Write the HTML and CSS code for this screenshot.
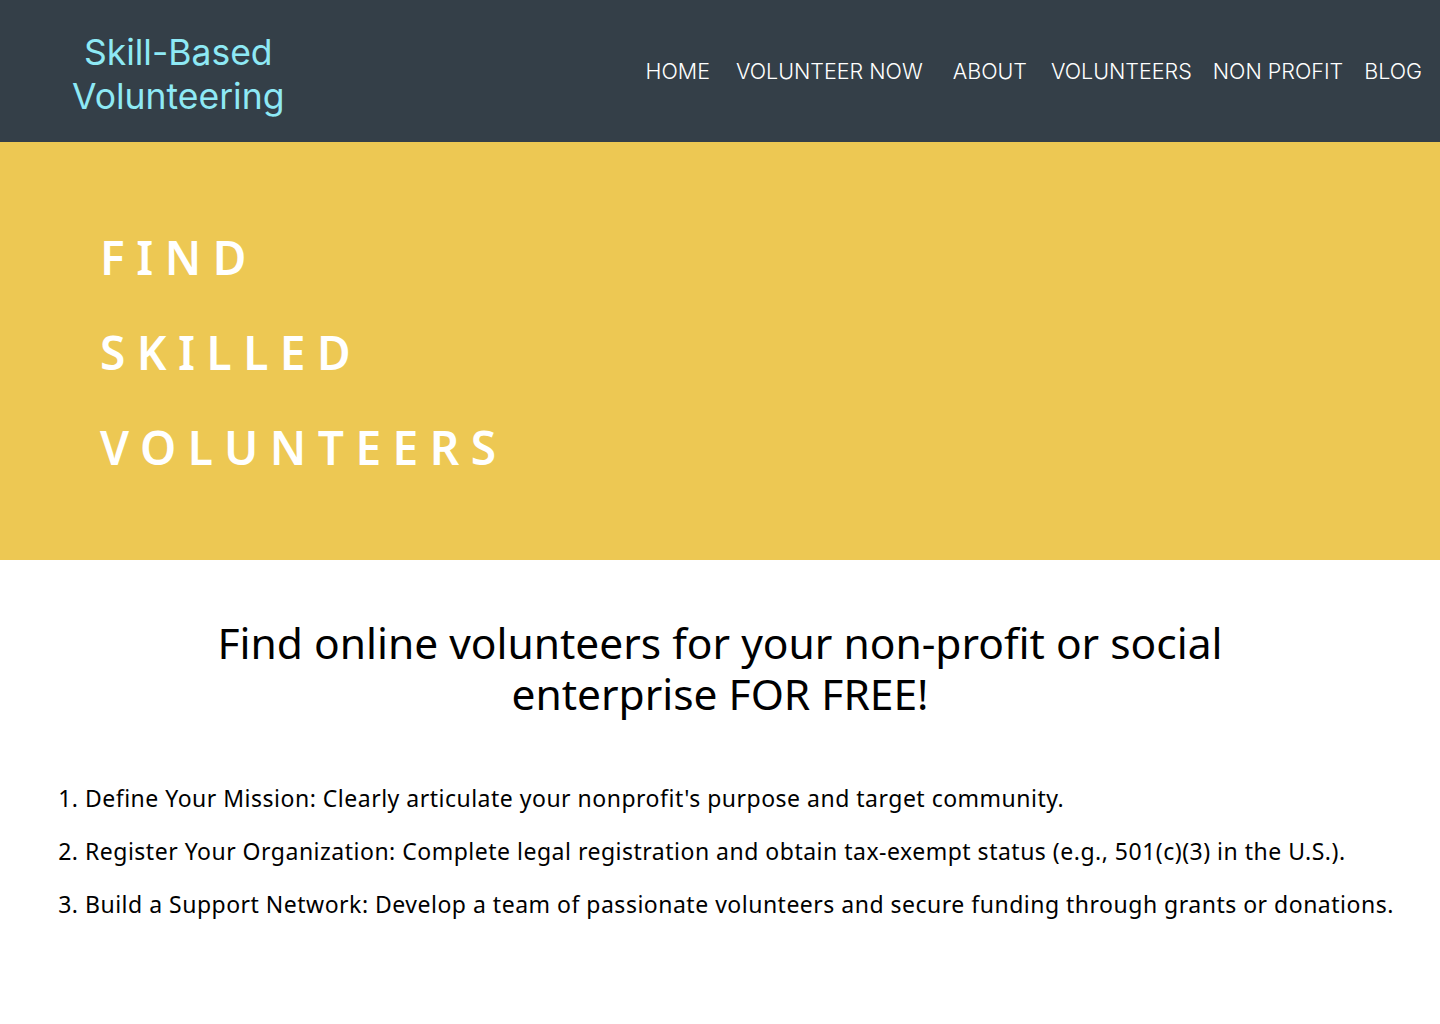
FILE: index.html
```html
<!DOCTYPE html>
<html lang="en">
<head>
<meta charset="utf-8">
<title>Skill-Based Volunteering</title>
<link rel="stylesheet" href="styles.css">
</head>
<body>
<header class="site-header">
  <div class="logo">Skill-Based<br>Volunteering</div>
  <nav class="nav">
    <a href="#">HOME</a>
    <a href="#" class="gap-a">VOLUNTEER NOW</a>
    <a href="#" class="gap-b">ABOUT</a>
    <a href="#" class="gap-c">VOLUNTEERS</a>
    <a href="#">NON PROFIT</a>
    <a href="#">BLOG</a>
  </nav>
</header>
<section class="hero">
  <div class="hero-line">FIND</div>
  <div class="hero-line">SKILLED</div>
  <div class="hero-line">VOLUNTEERS</div>
</section>
<main class="content">
  <h1 class="title">Find online volunteers for your non-profit or social<br>enterprise FOR FREE!</h1>
  <ol class="steps">
    <li>Define Your Mission: Clearly articulate your nonprofit's purpose and target community.</li>
    <li>Register Your Organization: Complete legal registration and obtain tax-exempt status (e.g., 501(c)(3) in the U.S.).</li>
    <li>Build a Support Network: Develop a team of passionate volunteers and secure funding through grants or donations.</li>
  </ol>
</main>
</body>
</html>
```
FILE: styles.css
```css
* { box-sizing: border-box; }
body { margin: 0; background: #fff; font-family: "Noto Sans", sans-serif; }
.site-header {
  height: 142px;
  background: #343f48;
  display: flex;
  align-items: center;
  justify-content: space-between;
  padding: 0 18px 0 72px;
}
.logo {
  font-family: Inter, sans-serif;
  color: #8ee9f5;
  font-size: 35.5px;
  line-height: 44px;
  text-align: center;
  margin-top: 8px;
}
.nav {
  display: flex;
  gap: 21px;
  margin-top: -1px;
}
.nav a {
  color: #fff;
  text-decoration: none;
  font-family: Inter, sans-serif;
  font-weight: 300;
  font-size: 21.5px;
}
.nav a.gap-a { margin-left: 5px; }
.nav a.gap-b { margin-left: 9px; }
.nav a.gap-c { margin-left: 3px; }
.hero {
  height: 418px;
  background: #edc853;
  padding: 68px 0 0 100px;
  display: flex;
  flex-direction: column;
}
.hero-line {
  font-family: "Noto Sans", sans-serif;
  color: #fff;
  font-weight: 600;
  font-size: 46px;
  letter-spacing: 11.5px;
  line-height: 95px;
}
.content { padding: 57px 20px 0; }
.title {
  margin: 0;
  text-align: center;
  font-weight: 400;
  font-size: 42.5px;
  line-height: 51px;
  color: #000;
}
.steps {
  margin: 53px 0 0;
  padding-left: 65px;
  font-size: 23px;
  letter-spacing: 0.5px;
  line-height: 53px;
  color: #000;
}
```
